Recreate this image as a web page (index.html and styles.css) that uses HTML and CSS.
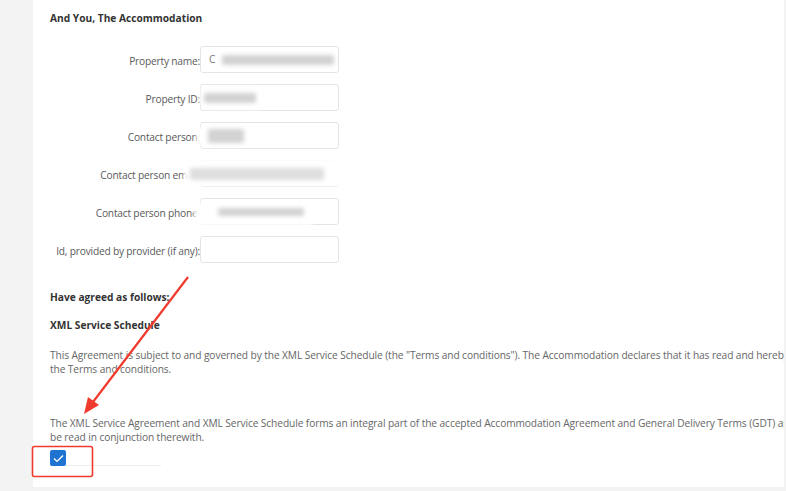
FILE: index.html
```html
<!DOCTYPE html>
<html lang="en">
<head>
  <meta charset="UTF-8">
  <title>XML Service Agreement</title>
  <link rel="stylesheet" href="styles.css">
</head>
<body>

  <main class="panel">
    <h3 class="section-title">And You, The Accommodation</h3>

    <div class="form">
      <div class="row">
        <label>Property name:</label>
        <div class="field">
          <input type="text" value="C">
          <span class="blur blur-name"></span>
        </div>
      </div>
      <div class="row">
        <label>Property ID:</label>
        <div class="field">
          <input type="text">
          <span class="mask mask-id"></span>
          <span class="blur blur-id"></span>
        </div>
      </div>
      <div class="row">
        <label>Contact person:</label>
        <div class="field">
          <input type="text">
          <span class="mask mask-person"></span>
          <span class="blur blur-person"></span>
        </div>
      </div>
      <div class="row">
        <label>Contact person email:</label>
        <div class="field">
          <input type="text">
          <span class="mask mask-email"></span>
          <span class="blur blur-email"></span>
        </div>
      </div>
      <div class="row">
        <label>Contact person phone:</label>
        <div class="field">
          <input type="text">
          <span class="mask mask-phone"></span>
          <span class="blur blur-phone"></span>
        </div>
      </div>
      <div class="row">
        <label>Id, provided by provider (if any):</label>
        <div class="field">
          <input type="text">
        </div>
      </div>
    </div>

    <h3 class="sub-title first">Have agreed as follows:</h3>
    <h3 class="sub-title">XML Service Schedule</h3>

    <p class="text">This Agreement is subject to and governed by the XML Service Schedule (the "Terms and conditions"). The Accommodation declares that it has read and hereby accepts<br>the Terms and conditions.</p>

    <p class="text gap">The XML Service Agreement and XML Service Schedule forms an integral part of the accepted Accommodation Agreement and General Delivery Terms (GDT) and shall<br>be read in conjunction therewith.</p>

    <div class="agree">
      <span class="check">
        <svg width="11" height="9" viewBox="0 0 11 9"><path d="M1 4.6 L4 7.4 L10 1.4" fill="none" stroke="#fff" stroke-width="1.4"/></svg>
      </span>
      <span class="agree-line"></span>
    </div>
  </main>

  <!-- annotation drawn over the screenshot -->
  <svg class="arrow" width="786" height="491" viewBox="0 0 786 491">
    <line x1="188" y1="277" x2="93" y2="402" stroke="#f03a2e" stroke-width="2.2"/>
    <path d="M84 414 L88 397 L99 405 Z" fill="#f03a2e"/>
    <rect x="32.5" y="446.5" width="60" height="30" rx="2" fill="none" stroke="#f03a2e" stroke-width="1.6"/>
  </svg>

</body>
</html>
```

FILE: styles.css
```css
body {
  margin: 0;
  background-color: #f3f3f3;
  font-family: "Open Sans", "Noto Sans", sans-serif;
  font-size: 10.2px;
  color: #5a5a5a;
  overflow: hidden;
}

.panel {
  margin-left: 33px;
  width: 734px;
  height: 476px;
  padding: 11px 0 0 17px;
  background-color: #fff;
  overflow: hidden;
}

.section-title,
.sub-title {
  margin: 0;
  font-size: 10.2px;
  font-weight: 700;
  color: #333;
  white-space: nowrap;
}

.form {
  margin-top: 20px;
  display: flex;
  flex-direction: column;
  gap: 10px;
}

.row {
  display: flex;
  align-items: center;
  height: 28px;
}

.row label {
  width: 150px;
  text-align: right;
  letter-spacing: -0.2px;
  white-space: nowrap;
  padding-top: 4px;
}

.field {
  position: relative;
}

.field input {
  width: 139px;
  height: 27px;
  box-sizing: border-box;
  border: 1px solid #e4e4e4;
  border-radius: 3px;
  padding: 0 8px;
  font-family: inherit;
  font-size: 10.2px;
  color: #777;
  background: #fff;
}

.mask {
  position: absolute;
  background-color: #fff;
  filter: blur(2px);
  border-radius: 6px;
}

.mask-id { left: 0; top: 3px; width: 62px; height: 22px; }
.mask-person { left: -4px; top: 4px; width: 50px; height: 20px; }
.mask-email { left: -16px; top: -2px; width: 160px; height: 28px; }
.mask-phone { left: -6px; top: 4px; width: 120px; height: 24px; }

.blur {
  position: absolute;
  background-color: #d2d2d2;
  filter: blur(2px);
  border-radius: 2px;
}

.blur-name { left: 22px; top: 9px; width: 112px; height: 10px; }
.blur-id { left: 4px; top: 9px; width: 52px; height: 10px; }
.blur-person { left: 8px; top: 7px; width: 36px; height: 14px; }
.blur-email { left: -10px; top: 8px; width: 134px; height: 12px; background-color: #dedede; }
.blur-phone { left: 18px; top: 10px; width: 86px; height: 8px; }

.sub-title.first {
  margin-top: 27px;
}

.sub-title {
  margin-top: 14px;
}

.text {
  margin: 16px 0 0;
  line-height: 14px;
  white-space: nowrap;
  color: #666;
  letter-spacing: -0.1px;
}

.text.gap {
  margin-top: 40px;
}

.agree {
  margin-top: 6px;
  display: flex;
  align-items: flex-end;
}

.check {
  width: 16px;
  height: 16px;
  background-color: #1f74d2;
  border-radius: 2px;
  display: flex;
  align-items: center;
  justify-content: center;
}

.agree-line {
  width: 95px;
  height: 1px;
  background-color: #eee;
}

.arrow {
  position: absolute;
  left: 0;
  top: 0;
  pointer-events: none;
}
```
